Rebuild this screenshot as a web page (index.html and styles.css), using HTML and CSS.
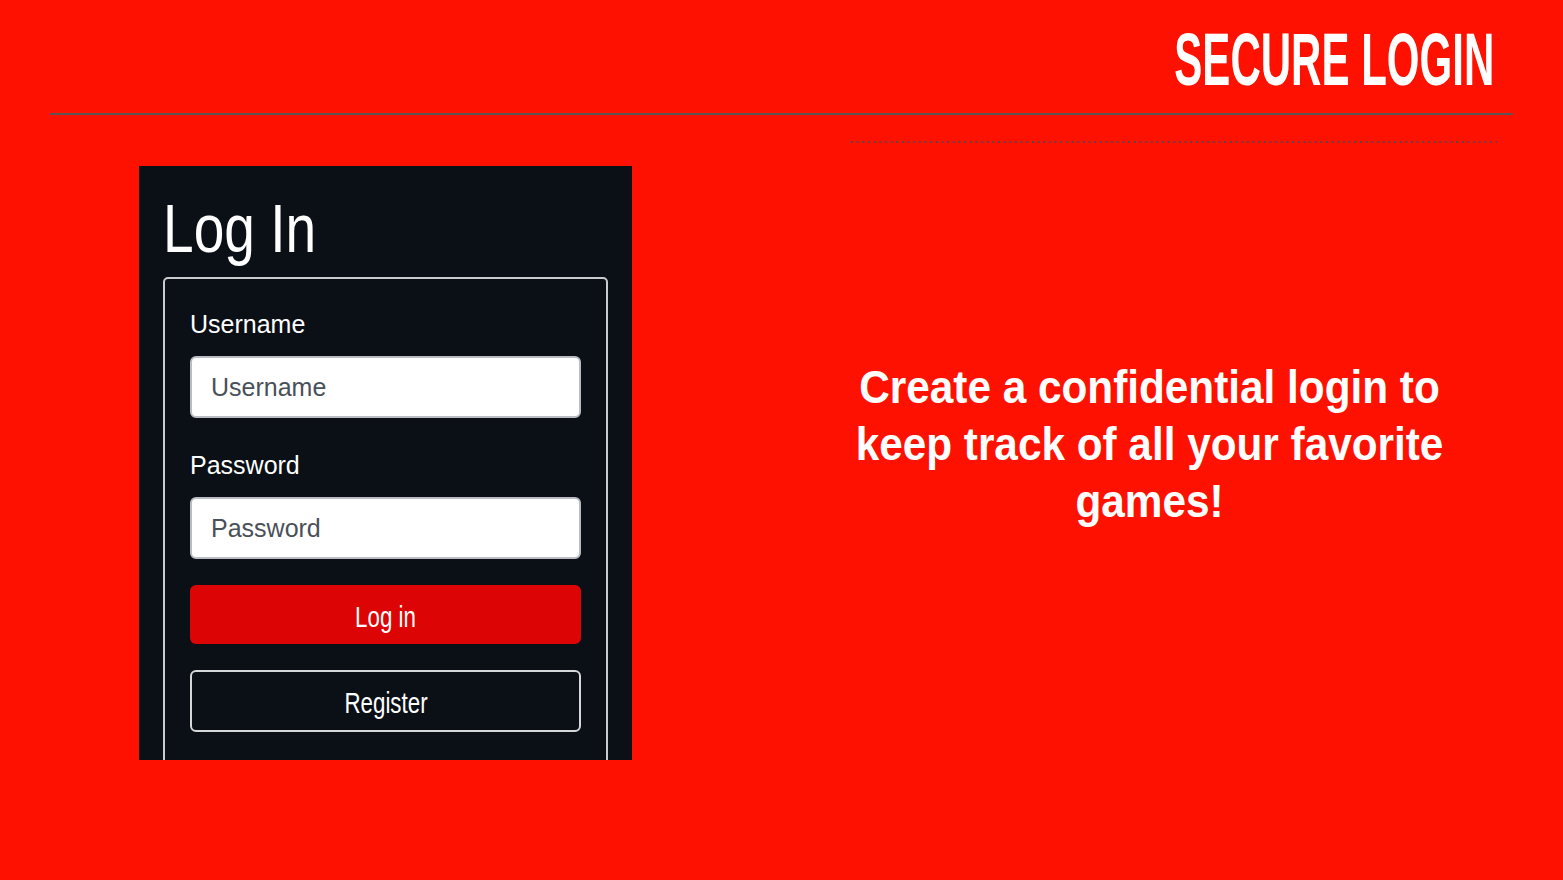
FILE: index.html
```html
<!DOCTYPE html>
<html lang="en">
<head>
<meta charset="utf-8">
<title>Secure Login</title>
<link rel="stylesheet" href="styles.css">
</head>
<body>
<div class="slide">
  <header class="head">
    <h1 class="title"><span class="title-text">SECURE LOGIN</span></h1>
  </header>
  <div class="rule"></div>
  <div class="dots"></div>
  <main class="content">
    <section class="panel">
      <h2 class="panel-title"><span class="panel-title-text">Log In</span></h2>
      <div class="box">
        <label class="label">Username</label>
        <div class="input">Username</div>
        <label class="label label-2">Password</label>
        <div class="input">Password</div>
        <div class="btn btn-primary"><span class="btn-text">Log in</span></div>
        <div class="btn btn-outline"><span class="btn-text">Register</span></div>
      </div>
    </section>
    <div class="blurb-wrap">
      <p class="blurb">Create a confidential login to<br>keep track of all your favorite<br>games!</p>
    </div>
  </main>
</div>
</body>
</html>
```
FILE: styles.css
```css
html, body {
  margin: 0;
  padding: 0;
}
body {
  background: #ff1100;
  width: 1563px;
  height: 880px;
  overflow: hidden;
  font-family: "Liberation Sans", Arial, sans-serif;
}
.slide {
  display: flex;
  flex-direction: column;
}
.head {
  display: flex;
  justify-content: flex-end;
  padding: 23px 69px 0 0;
  height: 90px;
  box-sizing: border-box;
}
.title {
  margin: 0;
  font-family: "Liberation Sans", sans-serif;
  font-weight: 700;
  font-size: 74px;
  line-height: 74px;
  color: #fff;
}
.title-text {
  display: inline-block;
  transform: scaleX(0.568);
  transform-origin: right center;
  white-space: nowrap;
}
.rule {
  margin: 23px 50px 0 50px;
  height: 2px;
  background: #5a5656;
}
.dots {
  margin: 26px 0 0 851px;
  width: 646px;
  height: 2px;
  background-image: linear-gradient(to right, #544848 0 2px, transparent 2px 100%);
  background-size: 5.67px 2px;
}
.content {
  display: flex;
  align-items: flex-start;
  margin-top: 23px;
}
.panel {
  margin-left: 139px;
  width: 493px;
  height: 594px;
  background: #0b0f16;
  box-sizing: border-box;
  padding: 0 24px;
  overflow: hidden;
}
.panel-title {
  margin: 0;
  padding-top: 27px;
  height: 111px;
  box-sizing: border-box;
  font-family: "Liberation Sans", sans-serif;
  font-weight: 400;
  font-size: 68px;
  line-height: 70px;
  color: #fff;
}
.panel-title-text {
  display: inline-block;
  transform: scaleX(0.81);
  transform-origin: left center;
  white-space: nowrap;
}
.box {
  border: 2px solid #c9cbce;
  border-radius: 5px;
  width: 445px;
  box-sizing: border-box;
  padding: 30px 25px 40px 25px;
  display: flex;
  flex-direction: column;
  height: 520px;
}
.label {
  color: #fff;
  font-size: 25px;
  line-height: 30px;
  height: 30px;
}
.label-2 {
  margin-top: 32px;
}
.input {
  margin-top: 17px;
  height: 62px;
  box-sizing: border-box;
  background: #fff;
  border: 2px solid #b9bcc1;
  border-radius: 6px;
  padding-left: 19px;
  display: flex;
  align-items: center;
  color: #4a5059;
  font-size: 25px;
}
.btn {
  height: 59px;
  box-sizing: border-box;
  border-radius: 6px;
  display: flex;
  align-items: center;
  justify-content: center;
  padding-top: 5px;
  color: #fff;
  font-family: "Liberation Sans", sans-serif;
  font-size: 29px;
}
.btn-text {
  display: inline-block;
  transform: scaleX(0.77);
  white-space: nowrap;
}
.btn-primary {
  margin-top: 26px;
  background: #dd0406;
}
.btn-outline {
  margin-top: 26px;
  height: 62px;
  padding-top: 4px;
  border: 2px solid #d6d7d9;
  background: transparent;
}
.blurb-wrap {
  flex: 1;
  padding: 192px 76px 0 180px;
  display: flex;
  justify-content: center;
}
.blurb {
  margin: 0;
  text-align: center;
  color: #fff;
  font-family: "Liberation Sans", sans-serif;
  font-weight: 700;
  font-size: 47px;
  line-height: 57px;
  white-space: nowrap;
  transform: scaleX(0.9);
  transform-origin: center top;
}
```
